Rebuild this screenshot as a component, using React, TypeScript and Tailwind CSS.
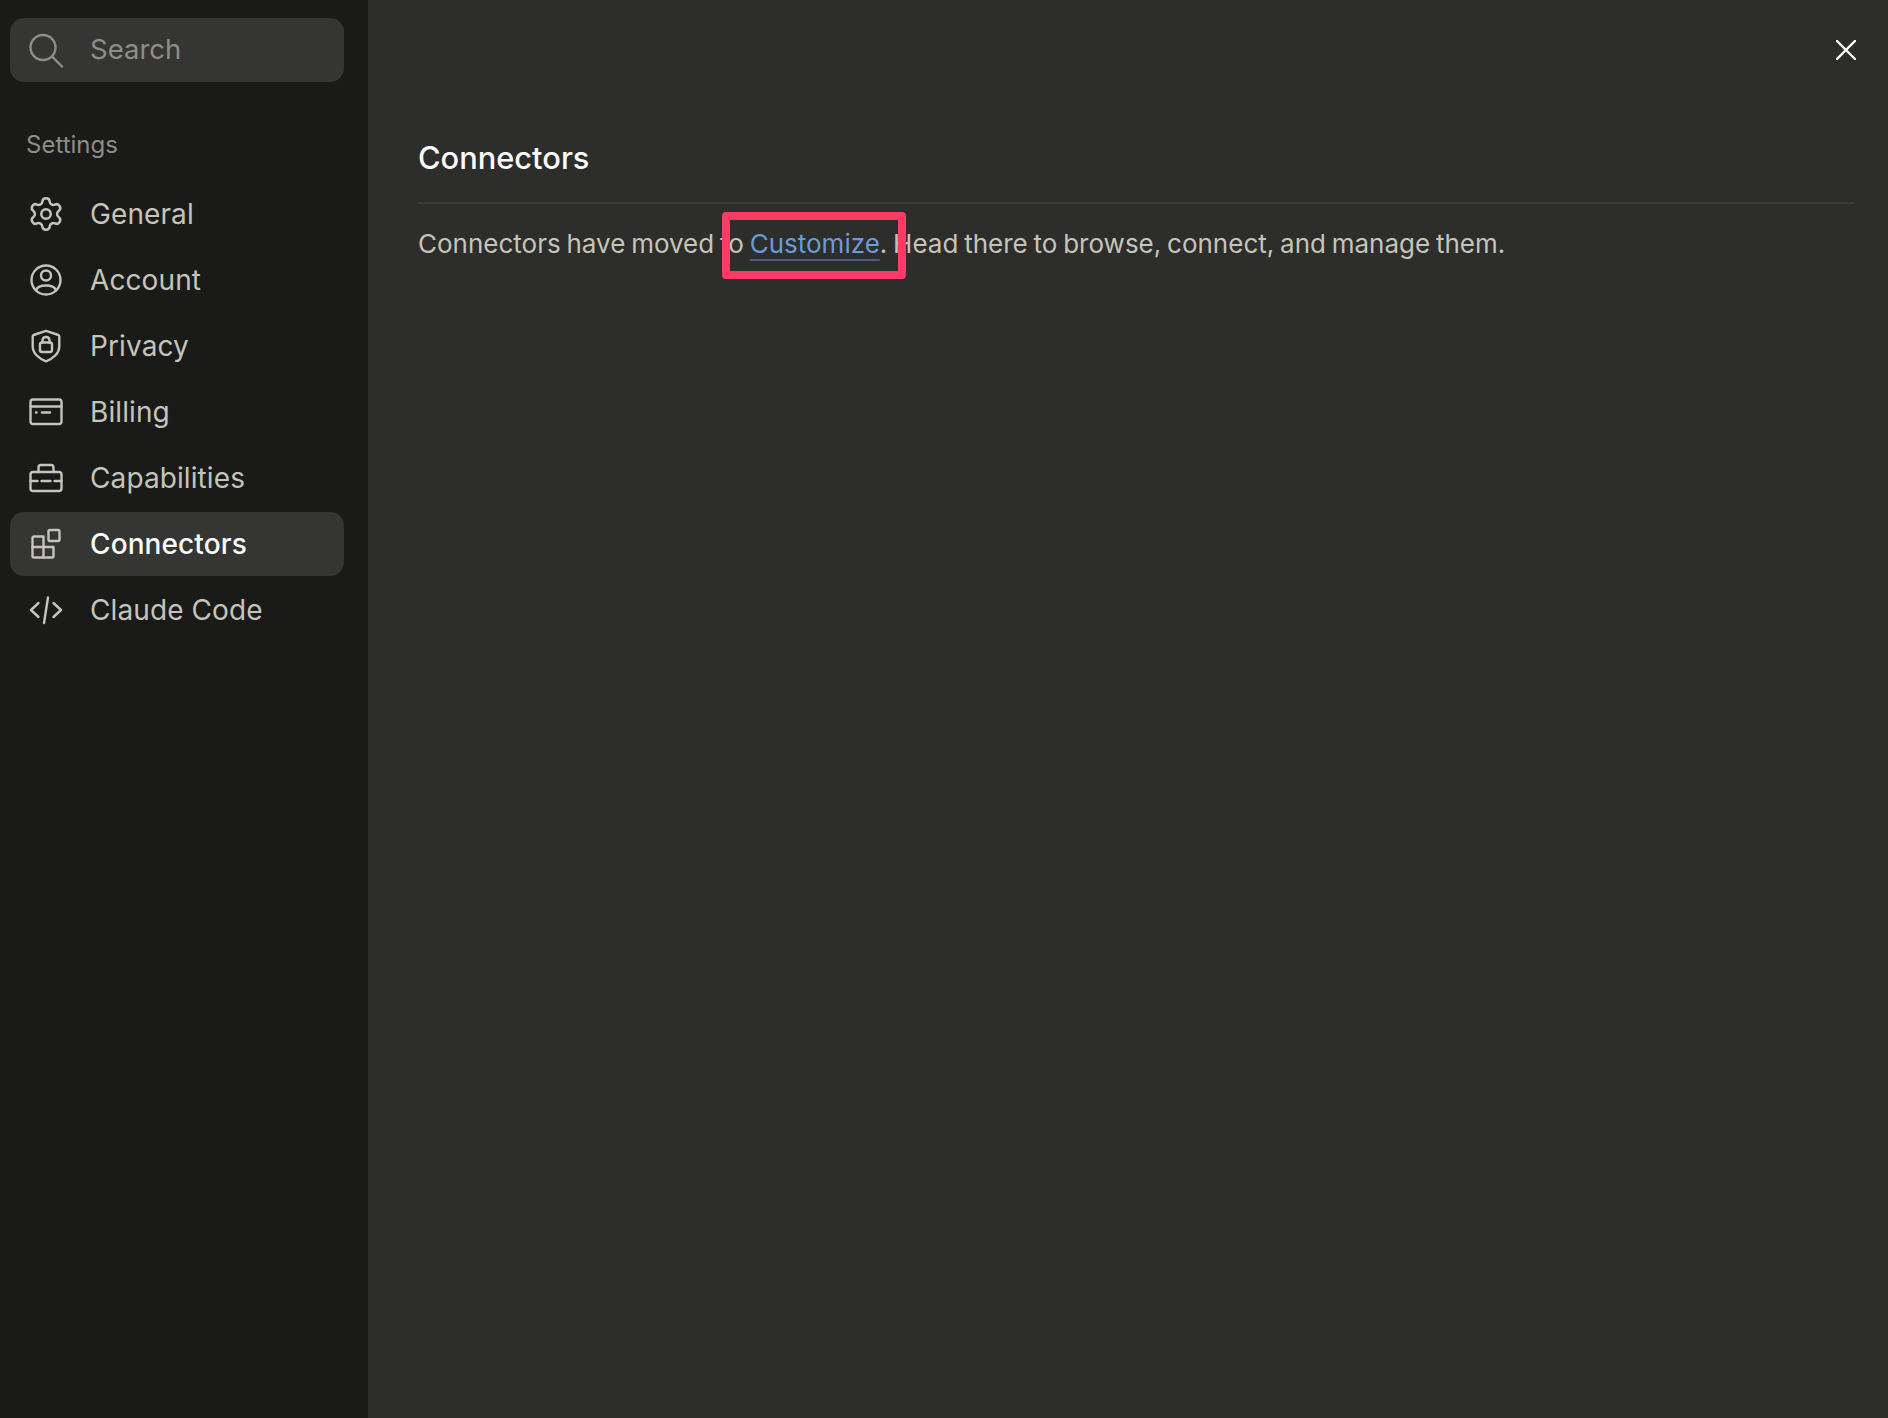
import { Settings } from "lucide-react";
import type { ReactNode } from "react";

const FONT = "font-['Inter','Liberation_Sans',sans-serif]";

const Svg = ({ children }: { children: ReactNode }) => (
  <svg width="36" height="36" viewBox="0 0 36 36" fill="none" stroke="currentColor" strokeWidth="2.4" strokeLinecap="round" strokeLinejoin="round" className="shrink-0">
    {children}
  </svg>
);

const AccountIcon = () => (
  <Svg>
    <circle cx="18" cy="18" r="14.5" />
    <circle cx="18" cy="13.5" r="5" />
    <path d="M8 28.5C9 25 13 23.5 18 23.5S27 25 28 28.5" />
  </Svg>
);

const PrivacyIcon = () => (
  <Svg>
    <path d="M18 2.8L30.5 7C31 7.2 31.3 7.6 31.3 8.2V18.5C31.3 25 25.5 30.5 18 33.3C10.5 30.5 4.7 25 4.7 18.5V8.2C4.7 7.6 5 7.2 5.5 7Z" />
    <rect x="12" y="14.5" width="12" height="9.5" rx="2" />
    <path d="M14.5 14.5V12.5C14.5 10.5 16 9 18 9S21.5 10.5 21.5 12.5V14.5" />
  </Svg>
);

const BillingIcon = () => (
  <Svg>
    <rect x="2.5" y="5.5" width="31" height="24.5" rx="2.5" />
    <path d="M2.5 12.5H33.5" />
    <path d="M8 18.5H8.5M14 18.5H22" />
  </Svg>
);

const CapabilitiesIcon = () => (
  <Svg>
    <rect x="2.5" y="12" width="31" height="19" rx="2.5" />
    <path d="M10.5 12V7.5C10.5 6 11.5 5 13 5H23C24.5 5 25.5 6 25.5 7.5V12" />
    <path d="M2.5 21H9.5M13.5 21H22.5M26.5 21H33.5" />
  </Svg>
);

const ConnectorsIcon = () => (
  <Svg>
    <path d="M6 10.5H15.5V31.5H6C5.2 31.5 4.5 30.8 4.5 30V12C4.5 11.2 5.2 10.5 6 10.5Z" />
    <path d="M4.5 21H25.5V30C25.5 30.8 24.8 31.5 24 31.5H15.5" />
    <rect x="20.5" y="4" width="11" height="11" rx="1.5" />
  </Svg>
);

const CodeIcon = () => (
  <Svg>
    <path d="M10.5 11L3 18L10.5 25" />
    <path d="M20 5.5L16 31" />
    <path d="M25.5 11L33 18L25.5 25" />
  </Svg>
);

const GeneralIcon = () => <Settings size={38} strokeWidth={1.55} className="shrink-0 -mx-px" />;

const items = [
  { label: "General", icon: <GeneralIcon /> },
  { label: "Account", icon: <AccountIcon /> },
  { label: "Privacy", icon: <PrivacyIcon /> },
  { label: "Billing", icon: <BillingIcon /> },
  { label: "Capabilities", icon: <CapabilitiesIcon /> },
  { label: "Connectors", icon: <ConnectorsIcon />, active: true },
  { label: "Claude Code", icon: <CodeIcon /> },
];

export default function App() {
  return (
    <div className={`flex h-screen overflow-hidden bg-[#2d2d2b] ${FONT}`}>
      <aside className="flex w-[368px] shrink-0 flex-col bg-[#1a1a19] px-[10px] pt-[18px]">
        <div className="flex h-[64px] w-[334px] items-center gap-[26px] rounded-[14px] bg-[#353534] px-[18px] text-[#8e8d86]">
          <svg width="36" height="36" viewBox="0 0 36 36" fill="none" stroke="currentColor" strokeWidth="2.4" strokeLinecap="round" className="shrink-0">
            <circle cx="15" cy="15.5" r="12.5" />
            <path d="M24 24.5L34 34.5" />
          </svg>
          <span className="text-[27.5px] leading-none">Search</span>
        </div>

        <div className="mt-[49px] pl-4 text-[24px] leading-[28px] text-[#8e8d86]">Settings</div>

        <nav className="mt-[23px] flex flex-col gap-[2px]">
          {items.map((item) => (
            <div
              key={item.label}
              className={`flex h-[64px] w-[334px] items-center gap-[26px] rounded-[14px] px-[18px] ${
                item.active ? "bg-[#353534] text-[#fafaf8]" : "text-[#c5c4b9]"
              }`}
            >
              <span className={item.active ? "flex text-[#c5c4b9]" : "flex"}>{item.icon}</span>
              <span className={`text-[28px] leading-none tracking-[0.1px] ${item.active ? "font-medium" : ""}`}>{item.label}</span>
            </div>
          ))}
        </nav>
      </aside>

      <main className="flex flex-1 flex-col pl-[50px] pr-[34px]">
        <div className="flex justify-end pt-[40px]">
          <svg width="20" height="20" viewBox="0 0 20 20" fill="none" stroke="#fafaf8" strokeWidth="2.4" strokeLinecap="square" className="-mr-[2px]">
            <path d="M1 1L19 19M19 1L1 19" />
          </svg>
        </div>

        <h1 className="mt-[78px] border-b-2 border-[#3b3b39] pb-[24px] text-[30.8px] leading-[40px] font-medium text-[#fafaf8]">Connectors</h1>

        <p className="mt-[20px] text-[26px] leading-[40px] text-[#c5c4b9] [word-spacing:-1.5px]">
          Connectors have moved to{" "}
          <span className="relative inline-block">
            <span className="text-[#6a9bd8] underline decoration-[#4a6180] decoration-2 underline-offset-[6px]">Customize</span>
            <span className="absolute top-[-12px] left-[-28px] h-[67px] w-[184px] rounded-[4px] border-[8px] border-[#fb3b66]" />
          </span>
          . Head there to browse, connect, and manage them.
        </p>
      </main>
    </div>
  );
}
